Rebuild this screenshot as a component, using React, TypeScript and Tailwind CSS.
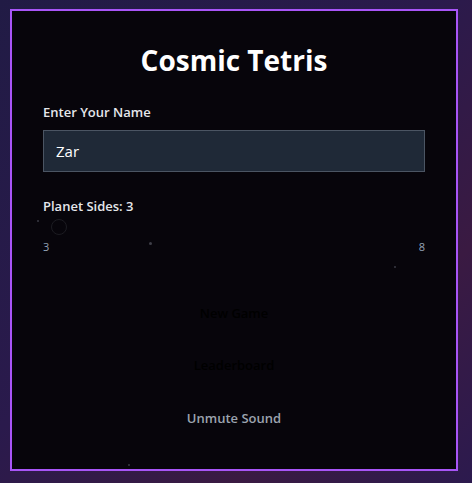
import React, { useState } from "react";

const stars = [
  { id: 1, left: "left-[25px]", top: "top-[209px]", size: "size-[2px]", tone: "bg-[#3a3a44]" },
  { id: 2, left: "left-[137px]", top: "top-[231px]", size: "size-[3px]", tone: "bg-[#3f3f48]" },
  { id: 3, left: "left-[382px]", top: "top-[255px]", size: "size-[2px]", tone: "bg-[#3a3a44]" },
  { id: 4, left: "left-[116px]", top: "top-[453px]", size: "size-[2px]", tone: "bg-[#3a3a44]" },
];

const App = () => {
  const [name, setName] = useState("Zar");

  return (
    <div className="min-h-screen w-full pl-[10px] pt-[9px] bg-[linear-gradient(135deg,#211b45_0%,#2a1a4c_45%,#3a1a42_75%,#2c1a4e_100%)] font-['Open_Sans','Noto_Sans',sans-serif]">
      <div className="relative w-[448px] h-[462px] border-2 border-[#a855f7] bg-[#07050b] px-[31px] pt-[31px]">
        {/* stars */}
        {stars.map((s) => (
          <span
            key={s.id}
            className={`absolute rounded-full ${s.left} ${s.top} ${s.size} ${s.tone}`}
          />
        ))}

        {/* title */}
        <h1 className="relative text-[28px] leading-9 font-bold text-white text-center mb-6">
          Cosmic Tetris
        </h1>

        {/* name */}
        <div className="relative mb-6">
          <label className="block text-[13px] leading-5 font-semibold text-gray-200 mb-2">
            Enter Your Name
          </label>
          <input
            value={name}
            onChange={(e) => setName(e.target.value)}
            className="w-full h-[42px] px-3 bg-[#1f2937] border border-[#4b5563] text-white text-[15px] outline-none"
          />
        </div>

        {/* planet sides */}
        <div className="relative">
          <label className="block text-[13px] leading-5 font-semibold text-gray-200 mb-[3px]">
            Planet Sides: 3
          </label>
          <div className="h-4 flex items-center pl-2">
            <div className="size-4 rounded-full border-[1.5px] border-[#1c1c22]" />
          </div>
          <div className="mt-1 flex justify-between text-[11px] leading-4 text-[#94a3b8]">
            <span>3</span>
            <span>8</span>
          </div>
        </div>

        {/* buttons */}
        <div className="relative mt-[37px] flex flex-col gap-2">
          <button className="h-11 w-full text-[13px] font-semibold text-black">
            New Game
          </button>
          <button className="h-11 w-full text-[13px] font-semibold text-black">
            Leaderboard
          </button>
          <button className="h-11 w-full text-[13px] font-semibold text-[#9ca3af] pt-px">
            Unmute Sound
          </button>
        </div>
      </div>
    </div>
  );
};

export default App;
